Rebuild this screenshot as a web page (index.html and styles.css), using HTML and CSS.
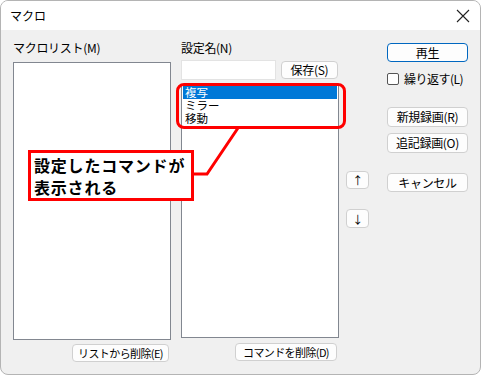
FILE: index.html
```html
<!DOCTYPE html>
<html>
<head>
    <meta charset="UTF-8">
    <title>マクロ</title>
    <link rel="stylesheet" href="styles.css">
</head>
<body>
    <div class="window">
        <div class="titlebar">
            <span class="title">マクロ</span>
            <svg class="close" width="14" height="14" viewBox="0 0 14 14">
                <path d="M1 1 L13 13 M13 1 L1 13" stroke="#222" stroke-width="1.1" fill="none"/>
            </svg>
        </div>

        <div class="content">
            <!-- マクロリスト -->
            <div class="col col-macro">
                <div class="label">マクロリスト(M)</div>
                <div class="listbox list-macro"></div>
                <div class="foot">
                    <button class="btn btn-del-list">リストから削除(E)</button>
                </div>
            </div>

            <!-- 設定名 / コマンド -->
            <div class="col col-cmd">
                <div class="label">設定名(N)</div>
                <div class="name-row">
                    <input type="text" class="name-input">
                    <button class="btn btn-save">保存(S)</button>
                </div>
                <div class="listbox list-cmd">
                    <div class="item selected">複写</div>
                    <div class="item">ミラー</div>
                    <div class="item">移動</div>
                </div>
                <div class="foot">
                    <button class="btn btn-del-cmd">コマンドを削除(D)</button>
                </div>
            </div>

            <div class="col col-move">
                <button class="btn btn-arrow btn-up">↑</button>
                <button class="btn btn-arrow btn-down">↓</button>
            </div>

            <div class="col col-actions">
                <button class="btn btn-play">再生</button>
                <label class="check-row"><span class="checkbox"></span>繰り返す(L)</label>
                <button class="btn btn-rec">新規録画(R)</button>
                <button class="btn btn-append">追記録画(O)</button>
                <button class="btn btn-cancel">キャンセル</button>
            </div>
        </div>

        <!-- 注釈 -->
        <div class="mark"></div>
        <svg class="leader" width="480" height="374">
            <polyline points="192,173 206,173 237,127" stroke="#ff0000" stroke-width="3" fill="none"/>
        </svg>
        <div class="callout">設定したコマンドが<br>表示される</div>
    </div>
</body>
</html>
```

FILE: styles.css
```css
html, body {
    margin: 0;
    background: #ffffff;
}

body {
    font-family: "Noto Sans CJK JP", "Noto Sans", sans-serif;
    font-size: 12px;
    color: #000;
}

.window {
    position: relative;
    width: 481px;
    height: 375px;
    box-sizing: border-box;
    border: 1px solid #b4b4b4;
    border-radius: 8px;
    background: #f0f0f0;
    overflow: hidden;
}

.titlebar {
    height: 29px;
    background: #ffffff;
    display: flex;
    align-items: center;
    justify-content: space-between;
    padding: 0 10px 0 9px;
}
.title {
    font-size: 12px;
    line-height: 16px;
}
.close {
    display: block;
}

.content {
    display: flex;
    padding: 10px 0 0 12px;
}

.col {
    display: flex;
    flex-direction: column;
}

.label {
    line-height: 16px;
    height: 16px;
    letter-spacing: -0.3px;
}

.listbox {
    box-sizing: border-box;
    background: #ffffff;
    border: 1px solid #828790;
}

.foot {
    display: flex;
    justify-content: flex-end;
    padding-right: 2px;
}

.btn {
    box-sizing: border-box;
    font-family: "Noto Sans CJK JP", "Noto Sans", sans-serif;
    font-size: 12px;
    line-height: 14px;
    padding: 0;
    color: #000;
    background: #fdfdfd;
    border: 1px solid #d0d0d0;
    border-radius: 4px;
    white-space: nowrap;
    letter-spacing: -0.3px;
}

/* マクロリスト */
.col-macro {
    width: 158px;
}
.list-macro {
    margin-top: 6px;
    height: 278px;
}
.col-macro .foot {
    margin-top: 4px;
}
.btn-del-list {
    width: 97px;
    height: 18px;
    font-size: 11px;
    letter-spacing: -0.6px;
}

/* 設定名 */
.col-cmd {
    width: 158px;
    margin-left: 10px;
}
.name-row {
    display: flex;
    align-items: center;
    margin-top: 4px;
    height: 20px;
}
.name-input {
    box-sizing: border-box;
    width: 95px;
    height: 20px;
    margin: 0;
    border: 1px solid #e3e3e3;
    background: #fff;
}
.btn-save {
    width: 57px;
    height: 18px;
    margin-left: 5px;
}
.list-cmd {
    margin-top: 4px;
    height: 254px;
    padding: 1px;
}
.item {
    font-size: 11.5px;
    line-height: 13px;
    height: 13px;
    padding-left: 2px;
}
.item.selected {
    background: #0078d7;
    color: #fff;
}
.col-cmd .foot {
    margin-top: 5px;
}
.btn-del-cmd {
    width: 102px;
    height: 18px;
    font-size: 11px;
    letter-spacing: -0.6px;
}

/* 上下 */
.col-move {
    width: 23px;
    margin-left: 7px;
    padding-top: 131px;
}
.btn-arrow {
    width: 23px;
    font-size: 11px;
}
.btn-up {
    height: 18px;
}
.btn-down {
    height: 19px;
    margin-top: 20px;
}

/* 右側 */
.col-actions {
    width: 81px;
    margin-left: 18px;
}
.btn-play {
    margin-top: 3px;
    height: 19px;
    border-color: #0067c0;
}
.check-row {
    display: flex;
    align-items: center;
    margin-top: 11px;
    height: 12px;
    line-height: 12px;
    white-space: nowrap;
    letter-spacing: -0.5px;
}
.checkbox {
    box-sizing: border-box;
    width: 12px;
    height: 12px;
    border: 1px solid #555;
    border-radius: 2px;
    background: #fff;
    margin-right: 5px;
}
.btn-rec {
    margin-top: 22px;
    height: 20px;
}
.btn-append {
    margin-top: 6px;
    height: 20px;
}
.btn-cancel {
    margin-top: 20px;
    height: 19px;
}

/* 注釈 */
.mark {
    position: absolute;
    left: 175px;
    top: 82px;
    width: 170px;
    height: 46px;
    box-sizing: border-box;
    border: 3px solid #ff0000;
    border-radius: 8px;
}
.leader {
    position: absolute;
    left: 0;
    top: 0;
}
.callout {
    position: absolute;
    left: 27px;
    top: 149px;
    width: 166px;
    height: 51px;
    box-sizing: border-box;
    border: 3px solid #ff0000;
    background: #ffffff;
    padding: 1px 0 0 3px;
    font-size: 16px;
    font-weight: bold;
    line-height: 22px;
    letter-spacing: 0.8px;
    white-space: nowrap;
}
```
